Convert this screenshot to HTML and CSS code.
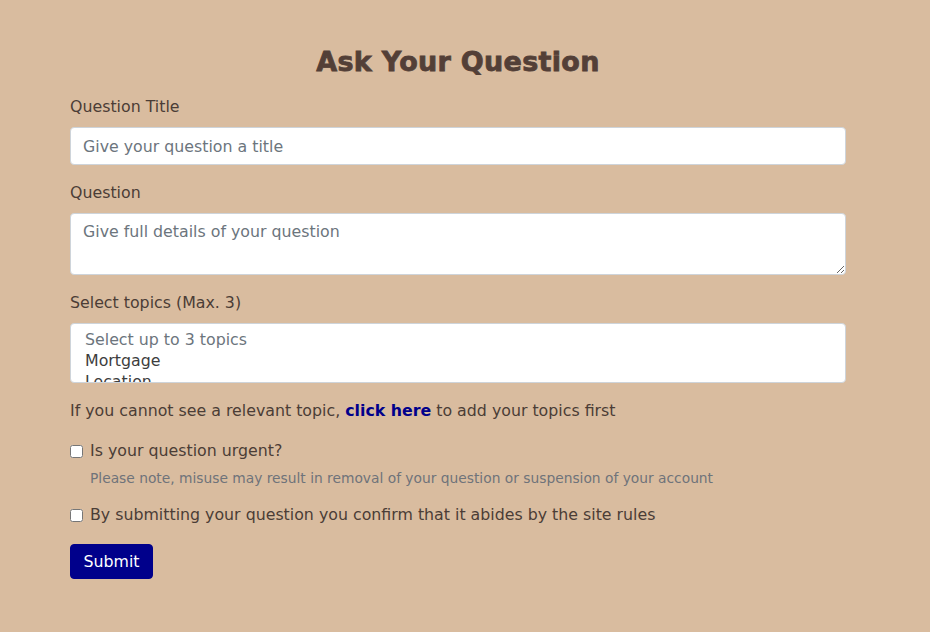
FILE: index.html
```html
<!DOCTYPE html>
<html>
<head>
<meta charset="utf-8">
<link rel="stylesheet" href="styles.css">
</head>
<body>
<main class="page">
  <h1 class="title">Ask Your Question</h1>
  <form class="form">
    <div class="group">
      <label class="label" for="qt">Question Title</label>
      <input class="control" id="qt" type="text" placeholder="Give your question a title">
    </div>
    <div class="group">
      <label class="label" for="qd">Question</label>
      <textarea class="control area" id="qd" placeholder="Give full details of your question"></textarea>
    </div>
    <div class="group">
      <label class="label" for="qs">Select topics (Max. 3)</label>
      <select class="control select" id="qs" multiple>
        <option class="ph" disabled>Select up to 3 topics</option>
        <option>Mortgage</option>
        <option>Location</option>
        <option>Renting</option>
      </select>
    </div>
    <p class="hint">If you cannot see a relevant topic, <a class="link" href="#">click here</a> to add your topics first</p>
    <div class="check">
      <input class="box" type="checkbox" id="c1">
      <label class="check-label" for="c1">Is your question urgent?</label>
    </div>
    <p class="note">Please note, misuse may result in removal of your question or suspension of your account</p>
    <div class="check check-2">
      <input class="box" type="checkbox" id="c2">
      <label class="check-label" for="c2">By submitting your question you confirm that it abides by the site rules</label>
    </div>
    <button class="submit" type="button">Submit</button>
  </form>
</main>
</body>
</html>
```
FILE: styles.css
```css
html, body {
  margin: 0;
  padding: 0;
  background: #d9bc9f;
}
body {
  font-family: "DejaVu Sans", "Open Sans", sans-serif;
  color: #4b3d36;
  font-size: 15.8px;
}
.page {
  width: 776px;
  margin: 0 auto;
  padding: 41px 0 40px;
  transform: translateX(-7px);
}
.title {
  margin: 0 0 12px;
  text-align: center;
  font-family: "DejaVu Sans", sans-serif;
  font-weight: 800;
  font-size: 27px;
  line-height: 42px;
  color: #533f37;
  letter-spacing: 0.3px;
  -webkit-text-stroke: 0.8px #533f37;
}
.form {
  display: flex;
  flex-direction: column;
}
.group {
  display: flex;
  flex-direction: column;
  margin-bottom: 16px;
}
.label {
  line-height: 24px;
  margin-bottom: 8px;
}
.control {
  box-sizing: border-box;
  width: 100%;
  border: 1px solid #ced4da;
  border-radius: 4px;
  background: #fff;
  font-family: inherit;
  font-size: 15.8px;
  color: #495057;
  padding: 6px 12px;
  margin: 0;
  outline: none;
}
.control::placeholder {
  color: #6c757d;
}
input.control {
  height: 38px;
}
.area {
  height: 62px;
  resize: vertical;
  line-height: 22px;
  padding-top: 7px;
}
.select {
  height: 60px;
  padding: 6px 14px 4px;
  overflow: hidden;
  color: #3d3d3d;
  line-height: 21px;
}
.select option {
  padding: 0;
  line-height: 21px;
  min-height: 21px;
}
.select .ph {
  color: #6c757d;
}
.hint {
  margin: 0 0 16px;
  line-height: 24px;
}
.link {
  color: #00008b;
  font-weight: bold;
  text-decoration: none;
}
.check {
  display: flex;
  align-items: center;
  gap: 7px;
  line-height: 24px;
}
.box {
  width: 13px;
  height: 13px;
  margin: 0;
}
.note {
  margin: 5px 0 15px 20px;
  font-size: 13.8px;
  line-height: 20px;
  color: #6f737a;
}
.check-2 {
  margin-bottom: 17px;
}
.submit {
  align-self: flex-start;
  width: 83px;
  height: 35px;
  border: 1px solid #00008b;
  border-radius: 4px;
  background: #00008b;
  color: #fff;
  font-family: inherit;
  font-size: 15.8px;
  padding: 0;
}
```
